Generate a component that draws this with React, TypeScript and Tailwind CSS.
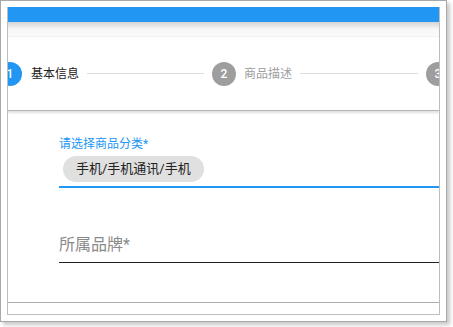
import React from 'react';

const font = { fontFamily: 'Roboto, "Noto Sans CJK SC", sans-serif' };

const StepCircle: React.FC<{ n: number; active?: boolean }> = ({ n, active }) => (
    <div
        className={`w-[24px] h-[24px] rounded-full flex items-center justify-center shrink-0 text-white text-[12px] font-medium ${
            active ? 'bg-[#2196f3]' : 'bg-[#9e9e9e]'
        }`}
    >
        {n}
    </div>
);

const App: React.FC = () => {
    return (
        <div className="w-[453px] h-[327px] bg-white" style={font}>
            <div className="w-[447px] h-[322px] border border-[#a8a8a8] bg-white p-[6px] shadow-[3px_3px_4px_rgba(0,0,0,0.22)]">
                <div className="h-full border-x border-b border-[#bdbdbd] overflow-hidden flex flex-col">
                    {/* top bar */}
                    <div className="h-[15px] bg-[#2196f3] shrink-0" />
                    <div className="h-[15px] shrink-0 bg-gradient-to-b from-[#d4d4d4] via-[#f7f7f7] to-[#fafafa] border-b border-[#f0f0f0]" />

                    {/* stepper */}
                    <div className="h-[74px] shrink-0 border-b border-[#b5b5b5] shadow-[0_2px_2px_rgba(0,0,0,0.12)] flex items-center">
                        <div className="flex items-center ml-[-10px] shrink-0">
                            <StepCircle n={1} active />
                            <span className="ml-[9px] text-[12px] text-[#212121] whitespace-nowrap">基本信息</span>
                            <div className="ml-[8px] w-[117px] h-px bg-[#dcdcdc]" />
                            <div className="ml-[8px]">
                                <StepCircle n={2} />
                            </div>
                            <span className="ml-[8px] text-[12px] text-[#9e9e9e] whitespace-nowrap">商品描述</span>
                            <div className="ml-[8px] w-[118px] h-px bg-[#dcdcdc]" />
                            <div className="ml-[8px]">
                                <StepCircle n={3} />
                            </div>
                        </div>
                    </div>

                    {/* form */}
                    <div className="h-[192px] shrink-0 pl-[51px] pt-[25px] border-b border-[#acacac] shadow-[0_2px_2px_rgba(0,0,0,0.12)]">
                        <div className="text-[12px] leading-[17px] text-[#2196f3]">请选择商品分类*</div>
                        <div className="border-b-2 border-[#2196f3] pb-[4px] pt-[3px] pl-[4px]">
                            <span className="inline-flex items-center h-[26px] px-[13px] rounded-full bg-[#e0e0e0] text-[13px] text-[#222]">
                                手机/手机通讯/手机
                            </span>
                        </div>
                        <div className="mt-[46px] border-b border-[#222] pb-[6px] text-[16px] leading-[22px] text-[#8a8a8a]">
                            所属品牌*
                        </div>
                    </div>
                    <div className="flex-1 bg-white" />
                </div>
            </div>
        </div>
    );
};

export default App;
